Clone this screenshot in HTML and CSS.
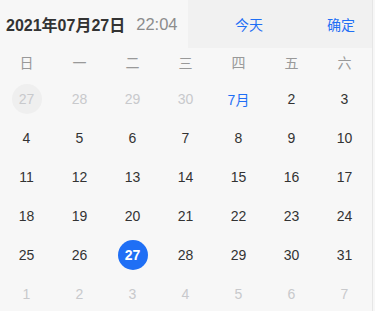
FILE: index.html
```html
<!DOCTYPE html>
<html lang="zh-CN">
<head>
<meta charset="utf-8">
<link rel="stylesheet" href="styles.css">
</head>
<body>
<div class="picker">
  <div class="header">
    <div class="current">
      <span class="date">2021年07月27日</span>
      <span class="time">22:04</span>
    </div>
    <div class="actions">
      <span class="btn today">今天</span>
      <span class="btn ok">确定</span>
    </div>
  </div>
  <div class="grid weekdays">
    <span>日</span><span>一</span><span>二</span><span>三</span><span>四</span><span>五</span><span>六</span>
  </div>
  <div class="grid days">
    <span class="day other"><i class="mark">27</i></span>
    <span class="day other">28</span>
    <span class="day other">29</span>
    <span class="day other">30</span>
    <span class="day month">7月</span>
    <span class="day">2</span>
    <span class="day">3</span>
    <span class="day">4</span><span class="day">5</span><span class="day">6</span><span class="day">7</span><span class="day">8</span><span class="day">9</span><span class="day">10</span>
    <span class="day">11</span><span class="day">12</span><span class="day">13</span><span class="day">14</span><span class="day">15</span><span class="day">16</span><span class="day">17</span>
    <span class="day">18</span><span class="day">19</span><span class="day">20</span><span class="day">21</span><span class="day">22</span><span class="day">23</span><span class="day">24</span>
    <span class="day">25</span><span class="day">26</span><span class="day"><i class="selected">27</i></span><span class="day">28</span><span class="day">29</span><span class="day">30</span><span class="day">31</span>
    <span class="day other">1</span><span class="day other">2</span><span class="day other">3</span><span class="day other">4</span><span class="day other">5</span><span class="day other">6</span><span class="day other">7</span>
  </div>
</div>
</body>
</html>
```
FILE: styles.css
```css
html, body {
  margin: 0;
  padding: 0;
  background: #f7f7f7;
}
body {
  font-family: "Liberation Sans", "Noto Sans CJK SC", sans-serif;
  color: #333;
  width: 375px;
  height: 311px;
  overflow: hidden;
}
.picker {
  width: 372px;
  height: 311px;
  border-right: 1px solid #e6e6e6;
}
.header {
  display: flex;
  height: 48px;
}
.current {
  width: 188px;
  box-sizing: border-box;
  padding-left: 6px;
  display: flex;
  align-items: center;
  gap: 11px;
  font-size: 16px;
}
.date {
  font-weight: bold;
  color: #333;
}
.time {
  color: #8c8c8c;
  font-size: 16.5px;
}
.actions {
  flex: 1;
  background: #f1f1f1;
  display: flex;
  align-items: center;
  font-size: 14px;
  color: #1f6ff5;
}
.today {
  width: 122px;
  text-align: center;
}
.ok {
  flex: 1;
  text-align: center;
}
.grid {
  display: grid;
  grid-template-columns: repeat(7, 53px);
  width: 371px;
}
.weekdays {
  height: 28px;
  align-items: center;
  font-size: 14px;
  color: #999;
  font-family: "Noto Sans CJK SC", sans-serif;
}
.weekdays span {
  text-align: center;
}
.days {
  margin-top: 3px;
  grid-auto-rows: 39px;
  font-size: 14px;
}
.day {
  display: flex;
  align-items: center;
  justify-content: center;
  color: #333;
}
.day.other {
  color: #c8c9cc;
}
.day.month {
  color: #1f6ff5;
}
.day i {
  font-style: normal;
  width: 30px;
  height: 30px;
  border-radius: 50%;
  display: flex;
  align-items: center;
  justify-content: center;
}
.mark {
  background: #efefef;
}
.selected {
  background: #1f6ff5;
  color: #fff;
  font-weight: bold;
}
```
